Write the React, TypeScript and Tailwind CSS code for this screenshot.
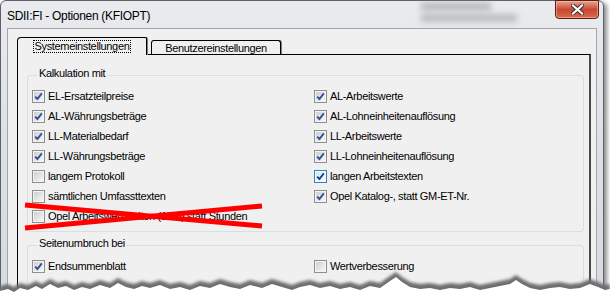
import React from "react";

type Item = { label: string; checked: boolean; hot?: boolean };

const leftItems: Item[] = [
  { label: "EL-Ersatzteilpreise", checked: true },
  { label: "AL-Währungsbeträge", checked: true },
  { label: "LL-Materialbedarf", checked: true },
  { label: "LL-Währungsbeträge", checked: true },
  { label: "langem Protokoll", checked: false },
  { label: "sämtlichen Umfassttexten", checked: false },
  { label: "Opel Arbeitswert-Zeiten (1/10) statt Stunden", checked: false },
];

const rightItems: Item[] = [
  { label: "AL-Arbeitswerte", checked: true },
  { label: "AL-Lohneinheitenauflösung", checked: true },
  { label: "LL-Arbeitswerte", checked: true },
  { label: "LL-Lohneinheitenauflösung", checked: true },
  { label: "langen Arbeitstexten", checked: true, hot: true },
  { label: "Opel Katalog-, statt GM-ET-Nr.", checked: true },
];

// jagged bottom edge of the "torn" screenshot
const edge: [number, number][] = [
  [0, 286], [8, 284], [14, 287], [20, 283], [28, 285], [36, 281], [42, 284], [50, 279],
  [58, 283], [66, 281], [74, 285], [82, 282], [90, 284], [100, 280], [110, 283], [118, 278],
  [126, 282], [134, 284], [142, 281], [150, 283], [160, 280], [170, 284], [180, 282],
  [190, 285], [200, 281], [210, 283], [220, 279], [230, 282], [240, 284], [250, 280],
  [262, 283], [272, 279], [282, 282], [292, 285], [300, 282], [310, 280], [320, 283],
  [330, 281], [340, 284], [350, 282], [360, 285], [370, 281], [380, 283], [390, 276],
  [396, 272], [402, 277], [410, 282], [420, 284], [430, 283], [440, 285], [450, 283],
  [460, 284], [470, 282], [480, 285], [490, 283], [500, 281], [510, 279], [516, 275],
  [522, 279], [530, 283], [540, 285], [550, 283], [560, 282], [570, 284], [580, 283],
  [590, 279], [598, 282], [605, 285], [610, 284],
];

function edgePath(dy: number) {
  const pts = edge.map(([x, y]) => `${x},${y + dy}`).join(" L");
  return `M0,300 L${pts} L610,300 Z`;
}

function Box({ checked, hot }: { checked: boolean; hot?: boolean }) {
  return (
    <span
      className={
        "relative flex w-[13px] h-[13px] shrink-0 border p-[1px] " +
        (hot ? "border-[#3c7fb1] bg-[#f4fbff]" : "border-[#8e8f8f] bg-[#f4f4f4]")
      }
    >
      <span
        className={
          "w-full h-full bg-gradient-to-br " +
          (hot ? "from-[#c9e8f8] to-[#ffffff]" : "from-[#cfcfcf] to-[#f7f7f7]")
        }
      />
      {checked && (
        <svg className="absolute left-0 top-0" width="11" height="11" viewBox="0 0 11 11">
          <path d="M2.2 5.6 L4.4 8 L8.8 2.4" fill="none" stroke={hot ? "#1c3f94" : "#2f4f9c"} strokeWidth="1.9" />
        </svg>
      )}
    </span>
  );
}

function Row({ item }: { item: Item }) {
  return (
    <div className="h-[20px] flex items-center gap-[3px]">
      <Box checked={item.checked} hot={item.hot} />
      <span className="leading-[13px] whitespace-nowrap">{item.label}</span>
    </div>
  );
}

function Group({ title, children, className }: { title: string; children: React.ReactNode; className?: string }) {
  return (
    <div className={"border border-[#d5dfe5] rounded-[3px] pl-[4px] " + (className ?? "")}>
      <div className="-mt-[9px] ml-[5px] w-fit px-[2px] bg-[#f0f0f0] leading-[13px]">{title}</div>
      {children}
    </div>
  );
}

export default function App() {
  return (
    <div className="relative w-[610px] h-[295px] bg-white overflow-hidden font-['Liberation_Sans',Arial,sans-serif] text-[11px] tracking-[-0.35px] text-black">
      {/* window */}
      <div className="w-[604px] h-[320px] border border-[#5d6168] rounded-t-[6px] bg-gradient-to-b from-[#e9ebee] via-[#dcdfe3] to-[#d6d9dd] shadow-[3px_2px_4px_rgba(0,0,0,0.45)] flex flex-col">
        <div className="relative h-[27px] flex items-start">
          <div className="absolute left-[420px] top-[2px] w-[70px] h-[7px] bg-[#8c8f94] blur-[3px] opacity-60" />
          <div className="absolute left-[420px] top-[13px] w-[96px] h-[8px] bg-[#8c8f94] blur-[3px] opacity-50" />
          <span className="relative pl-[6px] pt-[7px] text-[12px] tracking-[-0.3px] leading-[16px]">
            SDII:FI - Optionen (KFIOPT)
          </span>
          <div className="relative ml-auto mr-[4px] -mt-px w-[44px] h-[19px] rounded-b-[4px] border border-[#5c1d12] bg-gradient-to-b from-[#e6a392] via-[#c8482f] to-[#d76a50] flex items-center justify-center shadow-[inset_0_0_0_1px_rgba(255,200,190,0.5)]">
            <svg width="13" height="11" viewBox="0 0 13 11">
              <path d="M2 1.5 L11 9.5 M11 1.5 L2 9.5" stroke="#3a2a2a" strokeWidth="4" strokeLinecap="square" />
              <path d="M2 1.5 L11 9.5 M11 1.5 L2 9.5" stroke="#ffffff" strokeWidth="2.2" strokeLinecap="square" />
            </svg>
          </div>
        </div>

        {/* client area */}
        <div className="mx-[6px] flex-1 border border-[#a3a6ab] bg-[#f0f0f0] pt-[8px]">
          <div className="ml-[9px] h-[17px] flex items-end">
            <div className="relative z-10 -mb-px w-[130px] h-[18px] border border-b-0 border-black rounded-tl-[4px] rounded-tr-[2px] bg-[#f0f0f0] shadow-[1px_0_0_#7d7d7d] flex justify-center pt-[2px]">
              <span className="h-[13px] leading-[11px] border border-dotted border-black px-[1px]">Systemeinstellungen</span>
            </div>
            <div className="ml-[4px] w-[130px] h-[14px] border border-b-0 border-black rounded-t-[3px] bg-[#f0f0f0] shadow-[1px_0_0_#7d7d7d] flex justify-center pt-[1px] leading-[13px]">
              Benutzereinstellungen
            </div>
          </div>

          <div className="ml-[9px] w-[574px] h-[260px] border border-black border-r-2 border-r-[#4a4a4a] bg-[#f0f0f0] pt-[20px] pl-[9px]">
            <Group title="Kalkulation mit" className="w-[557px] pb-[5px]">
              <div className="mt-[6px] flex">
                <div className="w-[282px] flex flex-col">
                  {leftItems.map((it) => (
                    <Row key={it.label} item={it} />
                  ))}
                </div>
                <div className="flex flex-col">
                  {rightItems.map((it) => (
                    <Row key={it.label} item={it} />
                  ))}
                </div>
              </div>
            </Group>

            <Group title="Seitenumbruch bei" className="w-[557px] mt-[13px] h-[60px]">
              <div className="mt-[6px] flex">
                <div className="w-[282px]">
                  <Row item={{ label: "Endsummenblatt", checked: true }} />
                </div>
                <Row item={{ label: "Wertverbesserung", checked: false }} />
              </div>
            </Group>
          </div>
        </div>
      </div>

      {/* red strike-through */}
      <svg className="absolute inset-0 pointer-events-none" width="610" height="295">
        <line x1="25" y1="205" x2="262" y2="226" stroke="#ff0000" strokeWidth="5" />
        <line x1="25" y1="228" x2="262" y2="206" stroke="#ff0000" strokeWidth="5" />
      </svg>

      {/* torn bottom edge */}
      <svg className="absolute inset-0 pointer-events-none" width="610" height="295">
        <defs>
          <filter id="tornBlur" x="-5%" y="-50%" width="110%" height="200%">
            <feGaussianBlur stdDeviation="1.6" />
          </filter>
        </defs>
        <path d={edgePath(0)} fill="#6e6e6e" filter="url(#tornBlur)" />
        <path d={edgePath(5)} fill="#ffffff" />
      </svg>
    </div>
  );
}
